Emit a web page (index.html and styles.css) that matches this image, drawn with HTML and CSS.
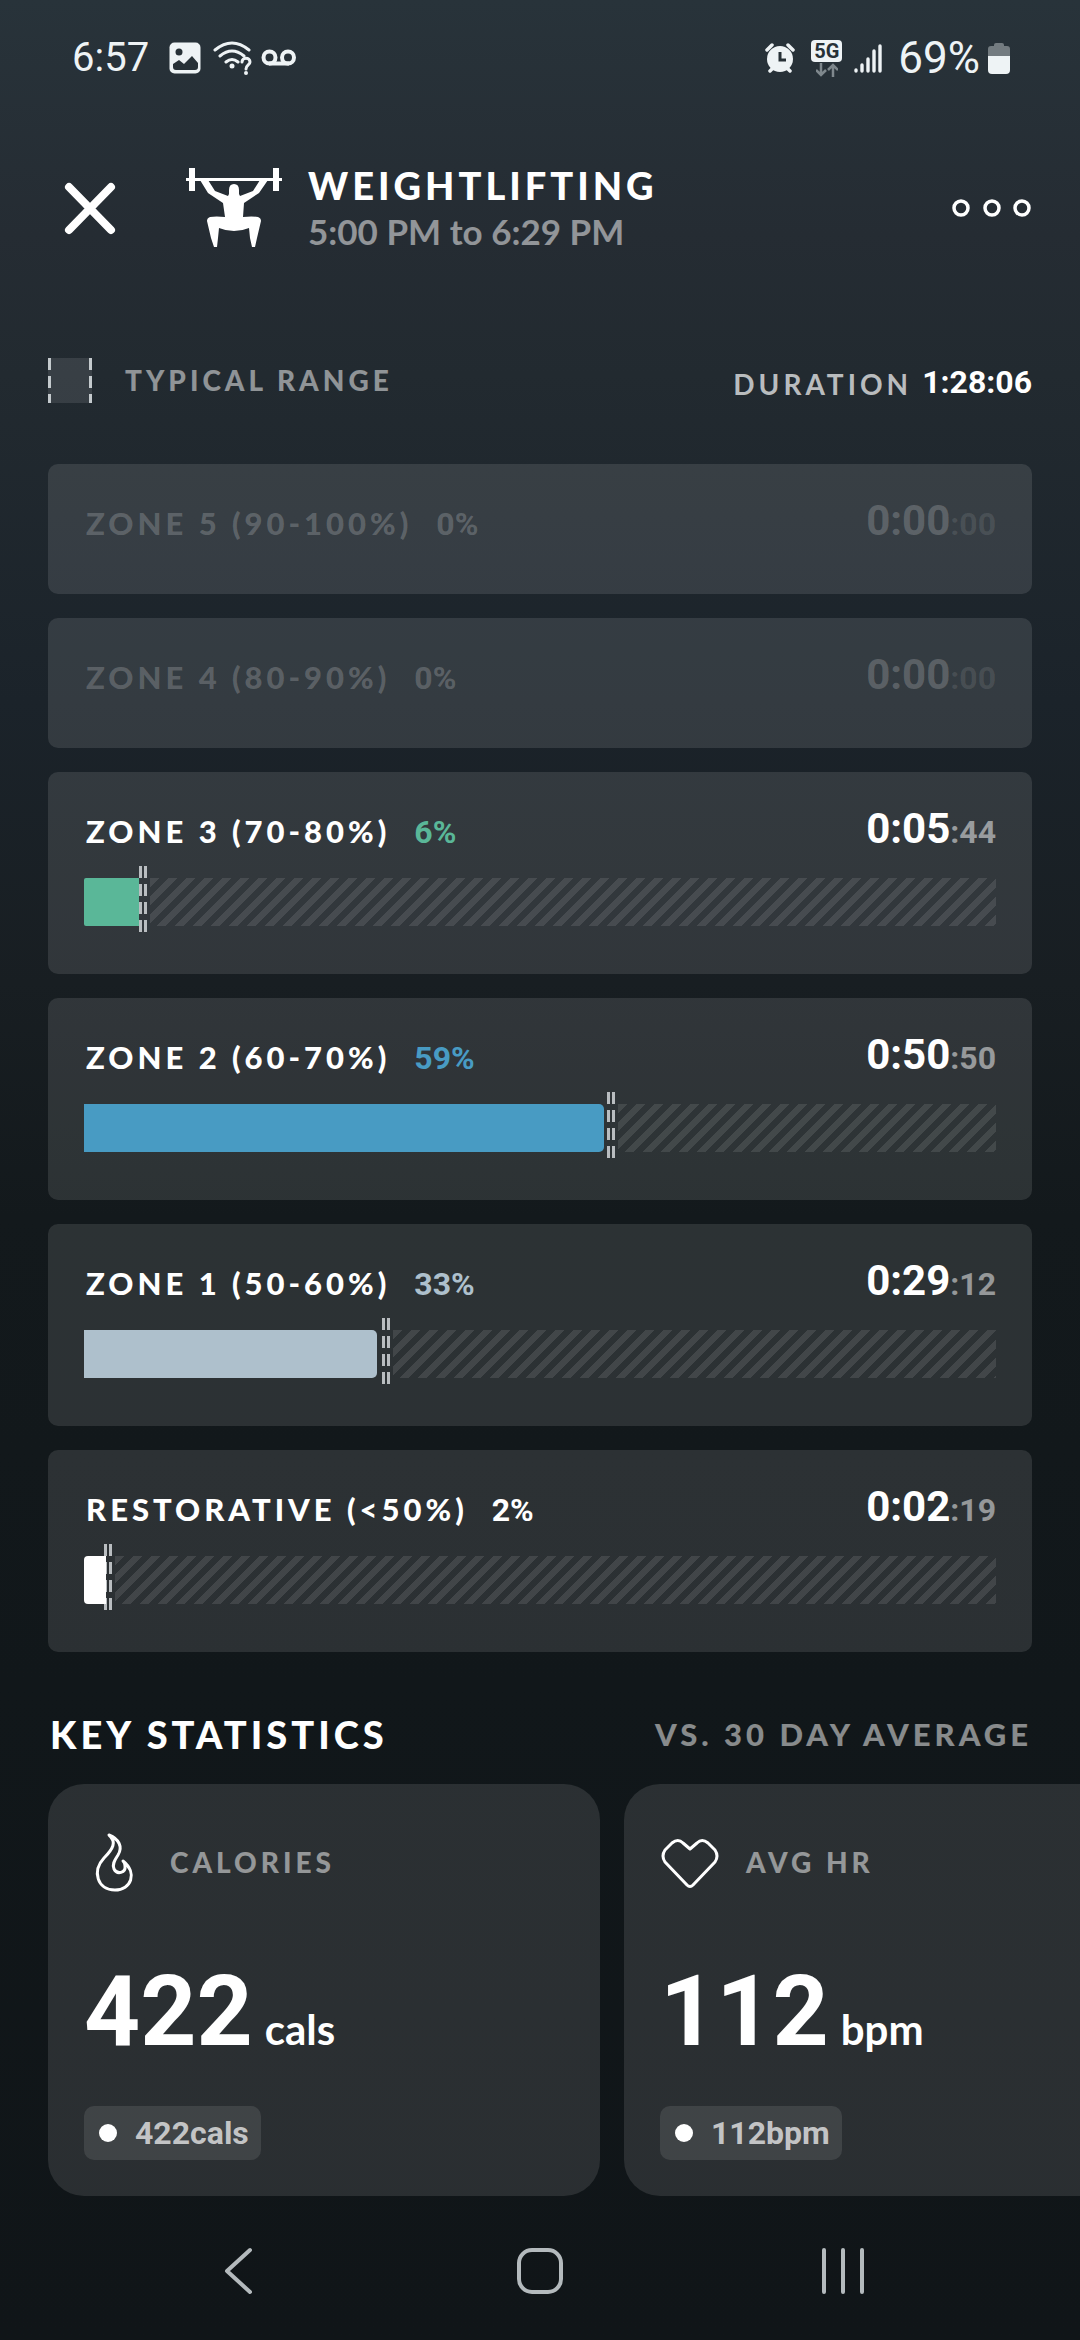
FILE: index.html
```html
<!DOCTYPE html>
<html lang="en">
<head>
  <meta charset="UTF-8">
  <meta name="viewport" content="width=device-width, initial-scale=1">
  <title>Weightlifting</title>
  <link rel="stylesheet" href="styles.css">
</head>
<body>
  <div class="status-bar">
    <div class="status-group">
      <span class="clock">6:57</span>
      <svg class="icon-image" width="32" height="32" viewBox="0 0 32 32">
        <rect x="0.5" y="0.5" width="31" height="31" rx="5" fill="#eef3f5"/>
        <circle cx="10" cy="10" r="3.5" fill="#273137"/>
        <path d="M4 25v-3l6-4 5 4 8-8 6 7v4q0 3-3 3H7q-3 0-3-3z" fill="#273137"/>
      </svg>
      <svg class="icon-wifi" width="40" height="36" viewBox="0 0 40 36" fill="none" stroke="#eef3f5" stroke-width="3" stroke-linecap="round">
        <path d="M2 10Q19-4 36 10M7 16q12-10 24 0M13 22q6-5 12 0"/>
        <circle cx="19" cy="26" r="2.5" fill="#eef3f5" stroke="none"/>
        <path d="M29 22c0-5 8-5 8 0 0 3-4 3-4 7" />
        <circle cx="33" cy="33" r="2" fill="#eef3f5" stroke="none"/>
      </svg>
      <svg class="icon-voicemail" width="36" height="18" viewBox="0 0 36 18" fill="none" stroke="#eef3f5" stroke-width="4">
        <circle cx="8.5" cy="8.5" r="6"/>
        <circle cx="27" cy="8.5" r="6"/>
        <path d="M8 14.5h20"/>
      </svg>
    </div>
    <div class="status-group">
      <svg class="icon-alarm" width="30" height="30" viewBox="0 0 30 30">
        <path d="M2 7l5-5M28 7l-5-5M5 28l4-4M25 28l-4-4" stroke="#eef3f5" stroke-width="3.5" stroke-linecap="round"/>
        <circle cx="15" cy="16" r="13" fill="#eef3f5"/>
        <path d="M15 9v8h6" fill="none" stroke="#273137" stroke-width="3"/>
      </svg>
      <span class="network">
        <span class="network-badge">5G</span>
        <svg width="22" height="14" viewBox="0 0 22 14" fill="none" stroke="#7f888d" stroke-width="2.5">
          <path d="M5 0v12M0 7l5 5 5-5M17 14V2M12 7l5-5 5 5"/>
        </svg>
      </span>
      <svg class="icon-signal" width="28" height="30" viewBox="0 0 28 30" stroke="#eef3f5" stroke-width="3.4" stroke-linecap="round">
        <path d="M2 27v1M8 22v6M14 16v12M20 8v20M26 3v25"/>
      </svg>
      <span class="battery-text">69%</span>
      <svg class="icon-battery" width="22" height="32" viewBox="0 0 22 32">
        <path d="M6 3q0-2 2-2h6q2 0 2 2v1h3q3 0 3 3v7H0V7q0-3 3-3h3z" fill="#737b80"/>
        <path d="M0 14h22v14q0 4-4 4H4q-4 0-4-4z" fill="#eef3f5"/>
      </svg>
    </div>
  </div>

  <header class="header">
    <button class="icon-button" aria-label="Close">
      <svg width="54" height="54" viewBox="0 0 54 54" stroke="#fff" stroke-width="8" stroke-linecap="round">
        <path d="M6 6l42 43M48 6L6 49"/>
      </svg>
    </button>
    <svg class="activity-icon" width="96" height="82" viewBox="0 0 96 82" fill="#fff">
      <path d="M0 11h3V1h6v23H3V14H0zM96 11h-3V1h-6v23h6V14h3z"/>
      <path d="M9 11h78v3H9z"/>
      <path d="M14 13h8l7 11 13 5 1-2v-4q0-6 5-6t5 6v4l1 2 13-5 7-11h8l-9 13-15 10-1 14q9-1 15 0 3 1 3 4l-4 17-2 9h-3l-2-9-1-10q-7 3-15 3t-15-3l-1 10-1 9h-3l-3-9-4-17q0-3 3-4 6-1 15 0l-2-14-15-10z"/>
    </svg>
    <div class="heading">
      <h1>WEIGHTLIFTING</h1>
      <p>5:00 PM to 6:29 PM</p>
    </div>
    <button class="icon-button" aria-label="More options">
      <svg width="80" height="20" viewBox="0 0 80 20" fill="none" stroke="#fff" stroke-width="3.5">
        <circle cx="9" cy="10" r="7"/>
        <circle cx="40" cy="10" r="7"/>
        <circle cx="70" cy="10" r="7"/>
      </svg>
    </button>
  </header>

  <main>
    <div class="legend">
      <span class="legend-swatch"></span>
      <span class="legend-label">TYPICAL RANGE</span>
      <span class="duration-label">DURATION</span>
      <span class="duration-value">1:28:06</span>
    </div>

    <section class="zones">
      <article class="zone zone-empty">
        <div class="zone-head">
          <h2>ZONE 5 (90-100%)</h2>
          <span class="percent">0%</span>
          <span class="time">0:00<small>:00</small></span>
        </div>
      </article>
      <article class="zone zone-empty">
        <div class="zone-head">
          <h2>ZONE 4 (80-90%)</h2>
          <span class="percent">0%</span>
          <span class="time">0:00<small>:00</small></span>
        </div>
      </article>
      <article class="zone zone-3">
        <div class="zone-head">
          <h2>ZONE 3 (70-80%)</h2>
          <span class="percent">6%</span>
          <span class="time">0:05<small>:44</small></span>
        </div>
        <div class="bar" style="--fill: 6%; --range: 6%">
          <div class="bar-fill"></div>
          <div class="bar-rest"></div>
          <div class="bar-range"></div>
        </div>
      </article>
      <article class="zone zone-2">
        <div class="zone-head">
          <h2>ZONE 2 (60-70%)</h2>
          <span class="percent">59%</span>
          <span class="time">0:50<small>:50</small></span>
        </div>
        <div class="bar" style="--fill: 57%; --range: 57.3%">
          <div class="bar-fill"></div>
          <div class="bar-rest"></div>
          <div class="bar-range"></div>
        </div>
      </article>
      <article class="zone zone-1">
        <div class="zone-head">
          <h2>ZONE 1 (50-60%)</h2>
          <span class="percent">33%</span>
          <span class="time">0:29<small>:12</small></span>
        </div>
        <div class="bar" style="--fill: 32.1%; --range: 32.7%">
          <div class="bar-fill"></div>
          <div class="bar-rest"></div>
          <div class="bar-range"></div>
        </div>
      </article>
      <article class="zone zone-0">
        <div class="zone-head">
          <h2>RESTORATIVE (&lt;50%)</h2>
          <span class="percent">2%</span>
          <span class="time">0:02<small>:19</small></span>
        </div>
        <div class="bar" style="--fill: 2.4%; --range: 2.2%">
          <div class="bar-fill"></div>
          <div class="bar-rest"></div>
          <div class="bar-range"></div>
        </div>
      </article>
    </section>

    <div class="stats-head">
      <h2>KEY STATISTICS</h2>
      <span>VS. 30 DAY AVERAGE</span>
    </div>

    <section class="stats">
      <article class="stat">
        <div class="stat-head">
          <svg width="60" height="60" viewBox="0 0 60 60" fill="none" stroke="#fff" stroke-width="3" stroke-linecap="round" stroke-linejoin="round">
            <path d="M25 3c10 4 14 12 9 20-4 6-6 10-4 14 3 6 12 4 11-3 0-2-1-4-2-5 15 12 8 29-8 29-18 0-23-19-11-32 9-9 13-16 5-23z"/>
          </svg>
          <h3>CALORIES</h3>
        </div>
        <p class="stat-value">422<span>cals</span></p>
        <div class="chip">422cals</div>
      </article>
      <article class="stat">
        <div class="stat-head">
          <svg width="60" height="60" viewBox="0 0 60 60" fill="none" stroke="#fff" stroke-width="3" stroke-linejoin="round">
            <path d="M30 17l-7-6q-5-5-11 0l-7 7q-4 6 0 12l22 23q3 3 6 0l22-23q4-6 0-12l-7-7q-6-5-11 0z"/>
          </svg>
          <h3>AVG HR</h3>
        </div>
        <p class="stat-value">112<span>bpm</span></p>
        <div class="chip">112bpm</div>
      </article>
    </section>
  </main>

  <nav class="nav-bar">
    <button class="icon-button" aria-label="Back">
      <svg width="48" height="52" viewBox="0 0 48 52" fill="none" stroke="#b4babd" stroke-width="4" stroke-linecap="round" stroke-linejoin="round">
        <path d="M37 5L14 26l23 21"/>
      </svg>
    </button>
    <button class="icon-button" aria-label="Home">
      <svg width="48" height="52" viewBox="0 0 48 52" fill="none" stroke="#b4babd" stroke-width="4">
        <rect x="3" y="5" width="42" height="42" rx="13"/>
      </svg>
    </button>
    <button class="icon-button" aria-label="Recent apps">
      <svg width="48" height="52" viewBox="0 0 48 52" stroke="#b4babd" stroke-width="4" stroke-linecap="round">
        <path d="M5 5v42M24 5v42M43 5v42"/>
      </svg>
    </button>
  </nav>
</body>
</html>
```
FILE: styles.css
```css
* {
  box-sizing: border-box;
  margin: 0;
  padding: 0;
}
body {
  min-height: 100vh;
  display: flex;
  flex-direction: column;
  font-family: Lato, "Open Sans", sans-serif;
  color: #fff;
  background: linear-gradient(#28333a 0%, #252c33 10%, #222a30 16%, #1b232a 30%, #181e22 42%, #13191c 52%, #11171a 72%, #101518 100%);
}
h1, h2, h3 {
  font-weight: 900;
}
.icon-button {
  display: flex;
  border: 0;
  background: none;
  cursor: pointer;
}

/* status bar */
.status-bar {
  display: flex;
  justify-content: space-between;
  padding: 33px 70px 0 72px;
  height: 116px;
  font-family: Roboto, sans-serif;
  font-size: 40px;
  line-height: 50px;
  color: #eef3f5;
}
.status-group {
  display: flex;
  align-items: center;
  height: 50px;
}
.icon-image {
  margin-left: 20px;
}
.icon-wifi {
  margin-left: 12px;
}
.icon-voicemail {
  margin-left: 8px;
}
.network {
  display: flex;
  flex-direction: column;
  align-items: center;
  gap: 1px;
  margin-left: 16px;
}
.network-badge {
  padding: 0 3px;
  border-radius: 4px;
  background: #eef3f5;
  color: #273137;
  font-size: 20px;
  font-weight: bold;
  line-height: 22px;
}
.icon-signal {
  margin-left: 12px;
}
.battery-text {
  margin-left: 16px;
  font-size: 44px;
}
.icon-battery {
  margin-left: 8px;
}

/* header */
.header {
  display: flex;
  align-items: center;
  padding: 46px 48px 0 63px;
}
.activity-icon {
  margin-left: 69px;
}
.heading {
  flex: 1;
  margin-left: 26px;
}
.heading h1 {
  font-size: 38px;
  line-height: 46px;
  letter-spacing: 4px;
}
.heading p {
  font-size: 35px;
  font-weight: bold;
  line-height: 46px;
  color: rgba(255, 255, 255, 0.5);
}

main {
  padding: 0 48px;
}

/* legend */
.legend {
  display: flex;
  align-items: center;
  height: 48px;
  margin: 102px 0 60px;
  font-weight: 900;
}
.legend-swatch {
  width: 44px;
  height: 45px;
  background:
    repeating-linear-gradient(#c4cacd 0 12px, transparent 12px 18px) left / 3px 100% no-repeat,
    repeating-linear-gradient(#c4cacd 0 12px, transparent 12px 18px) right / 3px 100% no-repeat,
    rgba(255, 255, 255, 0.1);
}
.legend-label {
  flex: 1;
  margin-left: 33px;
  font-size: 28px;
  letter-spacing: 4px;
  color: rgba(255, 255, 255, 0.5);
}
.duration-label {
  padding-top: 8px;
  font-size: 28px;
  font-weight: bold;
  letter-spacing: 4px;
  color: rgba(255, 255, 255, 0.7);
}
.duration-value {
  padding-top: 3px;
  margin-left: 10px;
  font-family: Roboto, sans-serif;
  font-size: 32px;
  font-weight: bold;
}

/* heart rate zones */
.zones {
  display: flex;
  flex-direction: column;
  gap: 24px;
}
.zone {
  padding: 30px 36px 48px;
  border-radius: 10px;
  background: rgba(255, 255, 255, 0.11);
}
.zone-head {
  display: flex;
  align-items: baseline;
  height: 52px;
  padding-left: 2px;
  line-height: 54px;
}
.zone-head h2 {
  font-size: 31px;
  letter-spacing: 4px;
}
.percent {
  margin-left: 24px;
  font-family: Roboto, sans-serif;
  font-size: 32px;
  font-weight: bold;
}
.time {
  margin-left: auto;
  font-family: Roboto, sans-serif;
  font-size: 42px;
  font-weight: bold;
}
.time small {
  font-size: 32px;
  color: rgba(255, 255, 255, 0.5);
}
.zone-empty {
  color: rgba(255, 255, 255, 0.2);
}
.zone-empty .time small {
  color: rgba(255, 255, 255, 0.1);
}
.zone-3 {
  --zone-color: #5ab798;
}
.zone-2 {
  --zone-color: #489bc3;
}
.zone-1 {
  --zone-color: #aec0cc;
}
.zone-0 {
  --zone-color: #fff;
}
.zone .percent {
  color: var(--zone-color);
}
.bar {
  position: relative;
  display: flex;
  height: 48px;
  margin-top: 24px;
}
.bar-fill {
  z-index: 1;
  flex: 0 0 var(--fill);
  border-radius: 0 5px 5px 0;
  background: var(--zone-color);
}
.zone-3 .bar-fill {
  border-radius: 2px 0 0 2px;
}
.zone-0 .bar-fill {
  border-radius: 4px 0 0 4px;
}
.bar-rest {
  flex: 1;
  margin-left: calc(var(--range) - var(--fill) + 11px);
  background: linear-gradient(135deg, rgba(255, 255, 255, 0.1) 25%, transparent 25% 50%, rgba(255, 255, 255, 0.1) 50% 75%, transparent 75%) 0 0 / 18px 18px;
}
/* dashed pair of lines marking the typical range */
.bar-range {
  position: absolute;
  top: -12px;
  left: var(--range);
  width: 8px;
  height: 66px;
  background:
    repeating-linear-gradient(#b9bdc0 0 12px, transparent 12px 18px) left / 3px 100% no-repeat,
    repeating-linear-gradient(#b9bdc0 0 12px, transparent 12px 18px) right / 3px 100% no-repeat;
}

/* key statistics */
.stats-head {
  display: flex;
  justify-content: space-between;
  align-items: center;
  height: 60px;
  margin: 52px 0 20px;
  padding-left: 2px;
}
.stats-head h2 {
  font-size: 38px;
  letter-spacing: 4px;
}
.stats-head span {
  font-size: 31px;
  font-weight: 900;
  letter-spacing: 4px;
  color: rgba(255, 255, 255, 0.5);
}
.stats {
  display: flex;
  gap: 24px;
  margin-right: -48px;
  overflow-x: auto;
  scrollbar-width: none;
}
.stat {
  flex: 0 0 552px;
  padding: 48px 36px 36px;
  border-radius: 36px;
  background: rgba(255, 255, 255, 0.11);
}
.stat-head {
  display: flex;
  align-items: center;
  gap: 26px;
}
.stat-head h3 {
  font-size: 28px;
  letter-spacing: 4px;
  color: rgba(255, 255, 255, 0.5);
}
.stat-value {
  margin: 60px 0 34px;
  font-family: Roboto, sans-serif;
  font-size: 98px;
  font-weight: bold;
  line-height: 120px;
}
.stat-value span {
  margin-left: 12px;
  font-family: Lato, sans-serif;
  font-size: 42px;
  line-height: 42px;
}
.chip {
  display: flex;
  align-items: center;
  width: max-content;
  height: 54px;
  padding: 0 12px 0 15px;
  border-radius: 10px;
  background: rgba(255, 255, 255, 0.1);
  font-family: Roboto, sans-serif;
  font-size: 32px;
  font-weight: bold;
  color: rgba(255, 255, 255, 0.7);
}
.chip::before {
  content: "";
  width: 18px;
  height: 18px;
  margin-right: 18px;
  border-radius: 50%;
  background: #fff;
}

.nav-bar {
  display: flex;
  justify-content: space-between;
  margin-top: auto;
  padding: 0 213px 43px;
}
```
